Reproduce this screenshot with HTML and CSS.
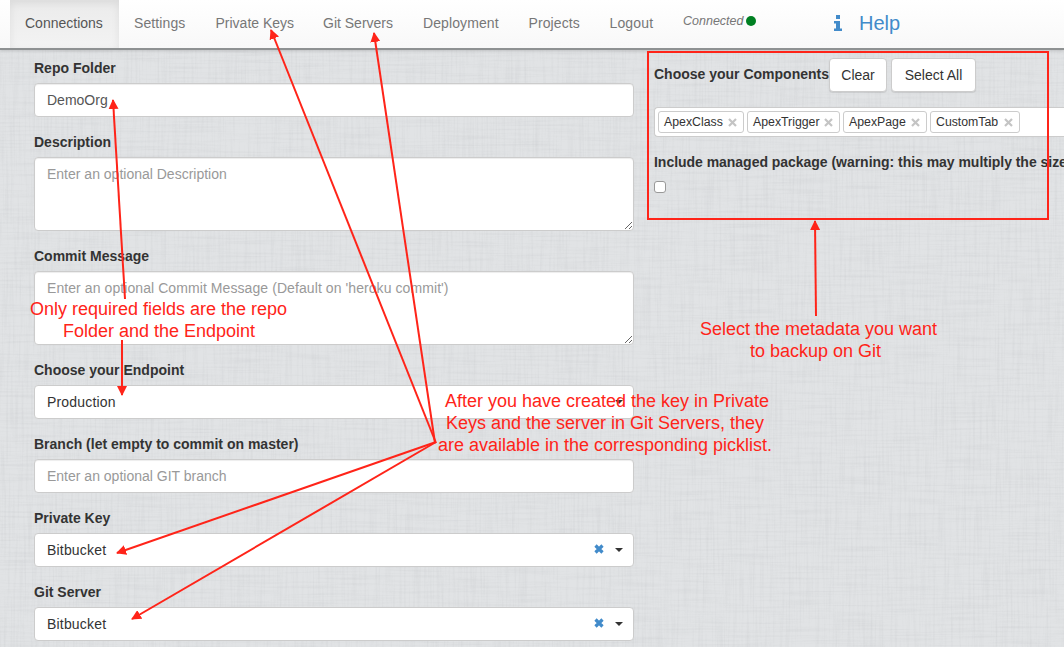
FILE: index.html
```
<!DOCTYPE html>
<html lang="en">
<head>
<meta charset="utf-8">
<title>Connections</title>
<link rel="stylesheet" href="styles.css">
</head>
<body>
<svg class="linen" width="1064" height="647" aria-hidden="true">
  <filter id="weave-h" x="0" y="0" width="100%" height="100%" color-interpolation-filters="sRGB">
    <feTurbulence type="fractalNoise" baseFrequency="0.018 0.45" numOctaves="2" seed="4"/>
    <feColorMatrix values="0 0 0 0 0.45  0 0 0 0 0.46  0 0 0 0 0.48  0.9 0 0 0 -0.39"/>
  </filter>
  <filter id="weave-v" x="0" y="0" width="100%" height="100%" color-interpolation-filters="sRGB">
    <feTurbulence type="fractalNoise" baseFrequency="0.45 0.018" numOctaves="2" seed="9"/>
    <feColorMatrix values="0 0 0 0 0.45  0 0 0 0 0.46  0 0 0 0 0.48  0.9 0 0 0 -0.39"/>
  </filter>
  <rect width="1064" height="647" filter="url(#weave-h)" opacity=".15"/>
  <rect width="1064" height="647" filter="url(#weave-v)" opacity=".15"/>
</svg>

<nav class="navbar">
  <a class="nav-item connections active">Connections</a>
  <a class="nav-item settings">Settings</a>
  <a class="nav-item keys">Private Keys</a>
  <a class="nav-item servers">Git Servers</a>
  <a class="nav-item deployment">Deployment</a>
  <a class="nav-item projects">Projects</a>
  <a class="nav-item logout">Logout</a>
  <span class="status"><em>Connected</em><i class="dot"></i></span>
  <a class="help">
    <svg width="8" height="16" viewBox="0 0 8 16"><path d="M2 0h4v4H2zM0 6h6v7.500h2V16H0v-2.500h2V8.500H0z" fill="#428bca"/></svg>
    <span>Help</span>
  </a>
</nav>

<main class="page">
  <form class="fields">
    <label class="label">Repo Folder</label>
    <div class="control typed">DemoOrg</div>
    <label class="label">Description</label>
    <textarea class="control area" placeholder="Enter an optional Description"></textarea>
    <label class="label">Commit Message</label>
    <textarea class="control area message" placeholder="Enter an optional Commit Message (Default on 'heroku commit')"></textarea>
    <label class="label">Choose your Endpoint</label>
    <div class="control select"><span class="value">Production</span><i class="caret"></i></div>
    <label class="label">Branch (let empty to commit on master)</label>
    <div class="control hint">Enter an optional GIT branch</div>
    <label class="label">Private Key</label>
    <div class="control select"><span class="value">Bitbucket</span><svg class="remove" viewBox="0 0 10 10"><path d="M1.500 1.500l7 7M8.500 1.500l-7 7"/></svg><i class="caret"></i></div>
    <label class="label">Git Server</label>
    <div class="control select"><span class="value">Bitbucket</span><svg class="remove" viewBox="0 0 10 10"><path d="M1.500 1.500l7 7M8.500 1.500l-7 7"/></svg><i class="caret"></i></div>
  </form>

  <section class="components">
    <div class="heading"><span class="label">Choose your Components</span><button class="btn clear">Clear</button><button class="btn all">Select All</button></div>
    <div class="tokens">
      <span class="token t1">ApexClass<svg viewBox="0 0 9 9"><path d="M1 1l7 7M8 1l-7 7"/></svg></span>
      <span class="token t2">ApexTrigger<svg viewBox="0 0 9 9"><path d="M1 1l7 7M8 1l-7 7"/></svg></span>
      <span class="token t3">ApexPage<svg viewBox="0 0 9 9"><path d="M1 1l7 7M8 1l-7 7"/></svg></span>
      <span class="token t4">CustomTab<svg viewBox="0 0 9 9"><path d="M1 1l7 7M8 1l-7 7"/></svg></span>
    </div>
    <label class="label managed">Include managed package (warning: this may multiply the size</label>
    <span class="check"></span>
  </section>
</main>

<svg class="notes" width="1064" height="647">
  <defs>
    <marker id="head" markerUnits="userSpaceOnUse" markerWidth="10" markerHeight="10" refX="9" refY="5" orient="auto"><path d="M0 0L10 5L0 10z"/></marker>
  </defs>
  <rect x="648" y="52" width="400" height="167"/>
  <g class="arrows">
    <path d="M125 299L113 100"/>
    <path d="M122 340V395"/>
    <path d="M436 443L271 30"/>
    <path d="M435 443L374 33"/>
    <path d="M436 442L117 553"/>
    <path d="M436 442L132 619"/>
    <path d="M816 316L815 221"/>
  </g>
  <g class="captions">
    <text x="30" y="315" textLength="257">Only required fields are the repo</text>
    <text x="63" y="337" textLength="192">Folder and the Endpoint</text>
    <text x="445" y="407" textLength="324">After you have created the key in Private</text>
    <text x="446" y="429" textLength="318">Keys and the server in Git Servers, they</text>
    <text x="438" y="451" textLength="334">are available in the corresponding picklist.</text>
    <text x="700" y="335" textLength="237">Select the metadata you want</text>
    <text x="750" y="357" textLength="131">to backup on Git</text>
  </g>
</svg>
</body>
</html>
```
FILE: styles.css
```
* { box-sizing: border-box; }

body {
  margin: 0;
  width: 1064px;
  height: 647px;
  position: relative;
  overflow: hidden;
  background: #e1e3e5;
  color: #333;
  font: 14px/20px "Liberation Sans", Arial, sans-serif;
}

.linen { position: absolute; inset: 0; z-index: -1; }

.navbar {
  display: flex;
  height: 50px;
  padding-left: 10px;
  background: linear-gradient(#fff, #f8f8f8);
  border-bottom: 2px solid #8e9192;
  box-shadow: 0 1px 3px rgba(0, 0, 0, .15);
}
.nav-item { flex: none; padding: 13px 0 13px 15px; color: #777; white-space: nowrap; }
.connections { width: 109px; }
.settings { width: 81.5px; letter-spacing: .1px; }
.keys { width: 107.5px; }
.servers { width: 100px; }
.deployment { width: 105.5px; letter-spacing: .1px; }
.projects { width: 81px; letter-spacing: .1px; }
.logout { width: 74.5px; letter-spacing: .15px; }
.nav-item.active {
  color: #555;
  background: linear-gradient(#ebebeb, #f3f3f3);
  box-shadow: inset 0 3px 9px rgba(0, 0, 0, .075);
}
.status {
  display: flex;
  align-items: center;
  height: 20px;
  margin: 11px 0 0 14px;
  color: #777;
  font-size: 12.5px;
}
.status em { width: 59px; }
.dot { width: 10px; height: 10px; margin-left: 4px; border-radius: 50%; background: #008022; }
.help {
  display: flex;
  align-items: center;
  height: 46px;
  margin-left: 78px;
  gap: 17px;
  color: #428bca;
  font-size: 20px;
}

.page { display: flex; gap: 20px; padding: 8px 0 0 34px; }
.fields { width: 600px; flex: none; }
.label { display: block; margin-bottom: 5px; font-weight: bold; white-space: nowrap; }
.control {
  display: block;
  width: 600px;
  height: 34px;
  margin: 0 0 15px;
  padding: 6px 12px;
  border: 1px solid #ccc;
  border-radius: 4px;
  background: #fff;
  color: #333;
  font: inherit;
  box-shadow: inset 0 1px 1px rgba(0, 0, 0, .075);
}
.control.typed { color: #555; }
.control.hint, .area::placeholder { color: #999; }
.area { height: 74px; resize: vertical; }
.message { letter-spacing: .08px; }
.control.select { display: flex; align-items: center; padding-right: 10px; box-shadow: none; }
.value { flex: 1; letter-spacing: .18px; }
.remove { width: 10px; height: 10px; margin: 0 11px 2px 0; }
.remove path { stroke: #428bca; stroke-width: 3.2; }
.caret { border: 4px solid transparent; border-top-color: #333; border-bottom: 0; }

.components { width: 410px; flex: none; overflow: hidden; }
.heading { display: flex; height: 34px; }
.heading .label { width: 175px; padding-top: 6px; }
.btn {
  flex: none;
  height: 34px;
  padding: 0;
  border: 1px solid #ccc;
  border-radius: 4px;
  background: #fff;
  color: #333;
  font: inherit;
  box-shadow: 0 1px 1px rgba(0, 0, 0, .1);
}
.clear { width: 58px; margin-right: 4px; }
.all { width: 85px; }
.tokens {
  display: flex;
  gap: 3px;
  height: 30px;
  margin: 15px 0;
  padding: 3px;
  border: 1px solid #ccc;
  border-right: 0;
  border-radius: 4px 0 0 4px;
  background: #fff;
}
.token {
  display: flex;
  align-items: center;
  justify-content: space-between;
  height: 22px;
  padding: 0 6px 0 5px;
  border: 1px solid #ccc;
  border-radius: 3px;
  font-size: 12.3px;
}
.t1 { width: 86px; }
.t2 { width: 93px; }
.t3 { width: 84px; }
.t4 { width: 90px; }
.token svg { width: 9px; height: 9px; }
.token path { stroke: #c4c4c4; stroke-width: 2.2; }
.managed { margin-bottom: 9px; letter-spacing: -.03px; }
.check {
  display: block;
  width: 12px;
  height: 12px;
  border: 1px solid #999;
  border-radius: 3px;
  background: #fff;
}

.notes { position: absolute; inset: 0; pointer-events: none; }
.notes rect { fill: none; stroke: #ff2419; stroke-width: 2; }
.arrows path { fill: none; stroke: #ff2419; stroke-width: 2; marker-end: url(#head); }
.notes marker path { fill: #ff2419; stroke: none; }
.captions { fill: #ff2419; font-size: 18px; }
```
